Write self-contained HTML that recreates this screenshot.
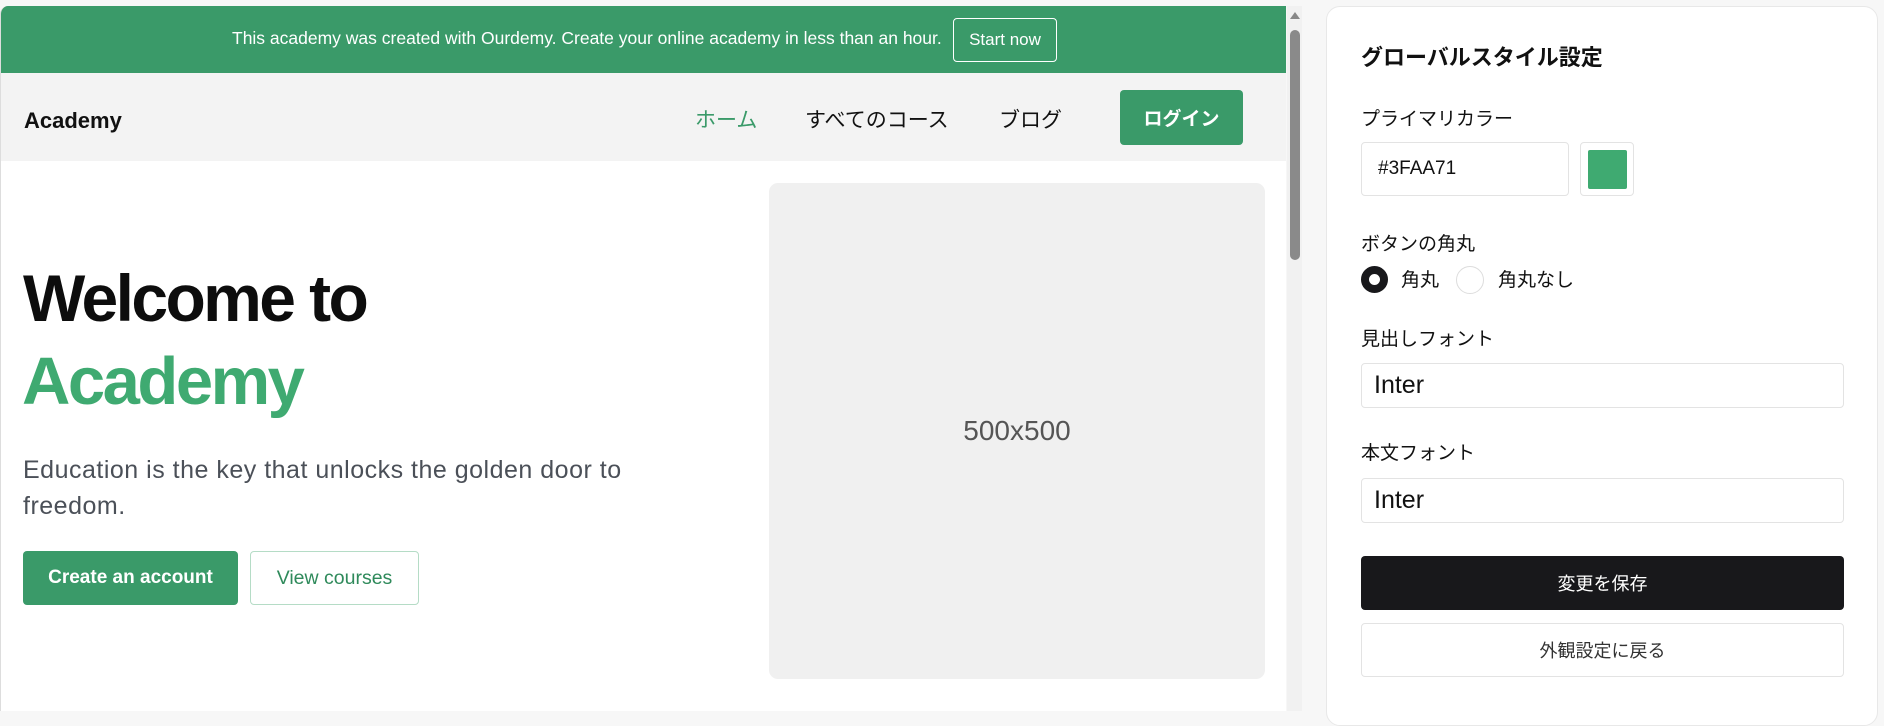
<!DOCTYPE html>
<html><head><meta charset="utf-8"><style>
*{margin:0;padding:0;box-sizing:border-box}
body{width:1884px;height:711px;overflow:hidden;background:#f7f7f7;font-family:"Liberation Sans","Noto Sans CJK JP",sans-serif;position:relative}
.a{position:absolute}
.frame{left:0;top:6px;width:1286px;height:705px;background:#fff;border-left:1px solid #ddd;border-top-left-radius:8px;overflow:hidden}
.banner{left:0;top:0;width:1286px;height:67px;background:#3a9a69;color:#fff;font-size:17.5px}
.nav{left:0;top:67px;width:1286px;height:88px;background:#f3f3f3}
.jp{font-family:"Noto Sans CJK JP",sans-serif}
.lbl{font-family:"Noto Sans CJK JP",sans-serif;font-size:19px;color:#111;line-height:1}
.inp{border:1px solid #e3e3e3;border-radius:4px;background:#fff}
</style></head><body>
<div class="a frame">
 <div class="a banner">
  <div class="a" style="left:231px;top:22px;white-space:nowrap">This academy was created with Ourdemy. Create your online academy in less than an hour.</div>
  <div class="a" style="left:952px;top:12px;width:104px;height:44px;border:1px solid #fff;border-radius:4px;text-align:center;line-height:42px;font-size:17px">Start now</div>
 </div>
 <div class="a nav">
  <div class="a" style="left:23px;top:37px;font-size:22px;font-weight:bold;color:#111;line-height:1">Academy</div>
  <div class="a jp" style="left:694px;top:31px;font-size:21px;color:#3a9a69">ホーム</div>
  <div class="a jp" style="left:804px;top:31px;font-size:21px;color:#111">すべてのコース</div>
  <div class="a jp" style="left:998px;top:31px;font-size:21px;color:#111">ブログ</div>
  <div class="a jp" style="left:1119px;top:17px;width:123px;height:55px;background:#3a9a69;border-radius:4px;color:#fff;font-size:19px;font-weight:bold;text-align:center;line-height:55px">ログイン</div>
 </div>
 <div class="a" style="left:22px;top:259px;font-size:66px;font-weight:bold;letter-spacing:-2.6px;color:#0d0d0d;line-height:1">Welcome to</div>
 <div class="a" style="left:21px;top:342px;font-size:67px;font-weight:bold;letter-spacing:-2.5px;color:#3faa71;line-height:1">Academy</div>
 <div class="a" style="left:22px;top:446px;width:650px;font-size:25px;letter-spacing:0.5px;line-height:36px;color:#4b5058">Education is the key that unlocks the golden door to freedom.</div>
 <div class="a" style="left:22px;top:545px;width:215px;height:54px;background:#3a9a69;border-radius:4px;color:#fff;font-size:19px;font-weight:bold;text-align:center;line-height:54px">Create an account</div>
 <div class="a" style="left:249px;top:545px;width:169px;height:54px;border:1px solid #b5dcc6;border-radius:4px;color:#2f8a5b;font-size:19.5px;text-align:center;line-height:52px">View courses</div>
 <div class="a" style="left:768px;top:177px;width:496px;height:496px;background:#f0f0f0;border-radius:9px;text-align:center;line-height:496px;font-size:28px;color:#555">500x500</div>
</div>
<div class="a" style="left:1287px;top:6px;width:15px;height:705px;background:#f1f1f1"></div>
<div class="a" style="left:1289px;top:12px;width:0;height:0;border-left:5px solid transparent;border-right:5px solid transparent;border-bottom:7px solid #888;margin-left:1px"></div>
<div class="a" style="left:1290px;top:30px;width:10px;height:230px;background:#8a8a8a;border-radius:5px"></div>
<div class="a" style="left:1326px;top:6px;width:552px;height:720px;background:#fff;border:1px solid #e8e8e8;border-radius:14px"></div>
<div class="a lbl" style="left:1361px;top:45px;font-size:22px;font-weight:bold">グローバルスタイル設定</div>
<div class="a lbl" style="left:1361px;top:108px">プライマリカラー</div>
<div class="a inp" style="left:1361px;top:142px;width:208px;height:54px;font-size:19px;line-height:52px;padding-left:16px;color:#111">#3FAA71</div>
<div class="a inp" style="left:1580px;top:142px;width:54px;height:54px"></div>
<div class="a" style="left:1588px;top:150px;width:39px;height:39px;background:#3faa71;border-radius:2px"></div>
<div class="a lbl" style="left:1361px;top:233px">ボタンの角丸</div>
<div class="a" style="left:1361px;top:266px;width:27px;height:27px;border-radius:50%;border:8px solid #18181b;background:#fff"></div>
<div class="a lbl" style="left:1401px;top:269px;font-size:19px">角丸</div>
<div class="a" style="left:1456px;top:266px;width:28px;height:28px;border-radius:50%;border:1px solid #ddd"></div>
<div class="a lbl" style="left:1498px;top:269px;font-size:19px">角丸なし</div>
<div class="a lbl" style="left:1361px;top:328px">見出しフォント</div>
<div class="a inp" style="left:1361px;top:363px;width:483px;height:45px;font-size:25px;line-height:43px;padding-left:12px;color:#111">Inter</div>
<div class="a lbl" style="left:1361px;top:442px">本文フォント</div>
<div class="a inp" style="left:1361px;top:478px;width:483px;height:45px;font-size:25px;line-height:43px;padding-left:12px;color:#111">Inter</div>
<div class="a jp" style="left:1361px;top:556px;width:483px;height:54px;background:#18181b;border-radius:4px;color:#fff;font-size:18px;text-align:center;line-height:54px">変更を保存</div>
<div class="a inp jp" style="left:1361px;top:623px;width:483px;height:54px;color:#333;font-size:18px;text-align:center;line-height:52px">外観設定に戻る</div>
</body></html>
